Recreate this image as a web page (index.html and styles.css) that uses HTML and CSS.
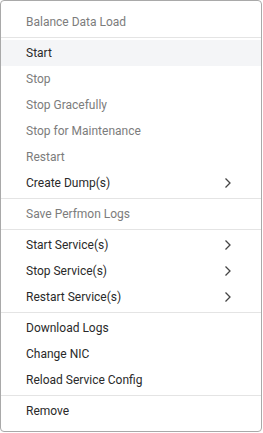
FILE: index.html
```html
<!DOCTYPE html>
<html lang="en">
<head>
  <meta charset="UTF-8" />
  <title>Context Menu</title>
  <link rel="stylesheet" href="styles.css">
</head>
<body>
  <div class="menu">
    <div class="item disabled">Balance Data Load</div>
    <div class="sep"></div>
    <div class="item active">Start</div>
    <div class="item disabled">Stop</div>
    <div class="item disabled">Stop Gracefully</div>
    <div class="item disabled">Stop for Maintenance</div>
    <div class="item disabled">Restart</div>
    <div class="item sub">Create Dump(s)
      <svg class="chev" width="8" height="12" viewBox="0 0 8 12"><path d="M1.5 1.5 L6 6 L1.5 10.5" fill="none" stroke="#444" stroke-width="1.3"/></svg>
    </div>
    <div class="sep"></div>
    <div class="item disabled">Save Perfmon Logs</div>
    <div class="sep"></div>
    <div class="item sub">Start Service(s)
      <svg class="chev" width="8" height="12" viewBox="0 0 8 12"><path d="M1.5 1.5 L6 6 L1.5 10.5" fill="none" stroke="#444" stroke-width="1.3"/></svg>
    </div>
    <div class="item sub">Stop Service(s)
      <svg class="chev" width="8" height="12" viewBox="0 0 8 12"><path d="M1.5 1.5 L6 6 L1.5 10.5" fill="none" stroke="#444" stroke-width="1.3"/></svg>
    </div>
    <div class="item sub">Restart Service(s)
      <svg class="chev" width="8" height="12" viewBox="0 0 8 12"><path d="M1.5 1.5 L6 6 L1.5 10.5" fill="none" stroke="#444" stroke-width="1.3"/></svg>
    </div>
    <div class="sep"></div>
    <div class="item">Download Logs</div>
    <div class="item">Change NIC</div>
    <div class="item">Reload Service Config</div>
    <div class="sep"></div>
    <div class="item">Remove</div>
  </div>
</body>
</html>
```
FILE: styles.css
```css
body {
  margin: 0;
  background: #fff;
  font-family: Roboto, "Noto Sans", sans-serif;
}
.menu {
  width: 262px;
  height: 432px;
  box-sizing: border-box;
  border: 1px solid #a9a9a9;
  border-radius: 4px;
  background: #fff;
  padding-top: 8px;
}
.item {
  display: flex;
  align-items: center;
  justify-content: space-between;
  height: 26px;
  padding: 0 29px 0 25px;
  font-size: 12px;
  color: #2a2a2a;
}
.item.disabled {
  color: #7c7c7c;
}
.item.active {
  background: #f4f5f7;
}
.chev {
  display: block;
}
.sep {
  height: 1px;
  background: #e4e4e4;
  margin: 2px 0 2px;
}
```
